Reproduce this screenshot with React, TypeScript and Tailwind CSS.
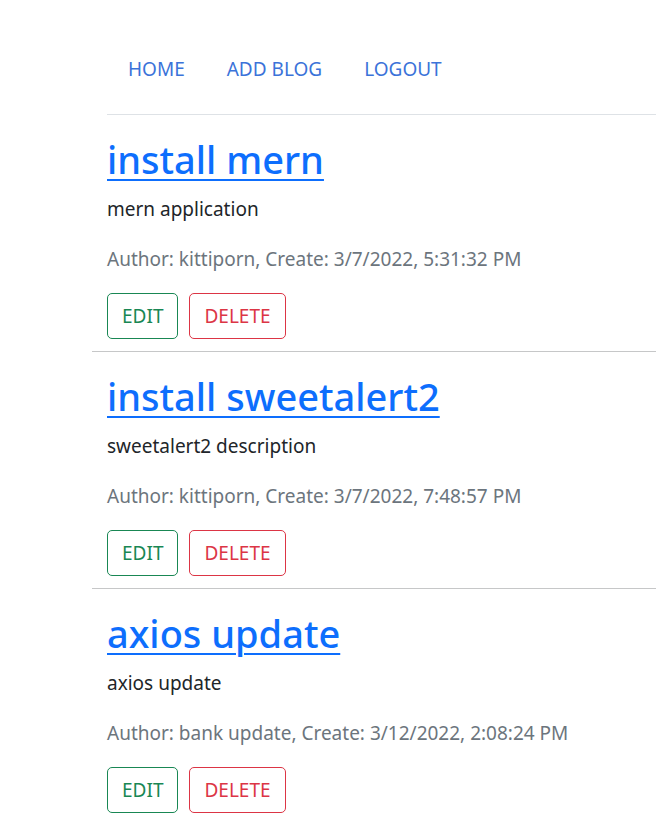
import React from 'react';

interface Blog {
  title: string;
  content: string;
  author: string;
  created: string;
}

const blogs: Blog[] = [
  { title: 'install mern', content: 'mern application', author: 'kittiporn', created: '3/7/2022, 5:31:32 PM' },
  { title: 'install sweetalert2', content: 'sweetalert2 description', author: 'kittiporn', created: '3/7/2022, 7:48:57 PM' },
  { title: 'axios update', content: 'axios update', author: 'bank update', created: '3/12/2022, 2:08:24 PM' },
];

const NavBar = () => (
  <nav className="ml-[15px] pt-[44px] pb-[20px] border-b border-[#dee2e6]">
    <ul className="flex">
      {['HOME', 'ADD BLOG', 'LOGOUT'].map((item) => (
        <li key={item}>
          <a href="#" className="block px-[21px] py-[10px] leading-[30px] text-[#3b73d9]">
            {item}
          </a>
        </li>
      ))}
    </ul>
  </nav>
);

const BlogItem = ({ blog }: { blog: Blog }) => (
  <div className="pl-[15px] pt-[20px] pb-[12px] border-b border-[#c6c7c8]">
    <a href="#" className="text-[38px] leading-[49px] font-medium text-[#0d6efd] underline decoration-[2px] underline-offset-[5px]">
      {blog.title}
    </a>
    <p className="mt-[10px] mb-[20px] leading-[30px] text-[#212529]">{blog.content}</p>
    <p className="mb-[19px] leading-[30px] text-[#6c757d]">
      Author: {blog.author}, Create: {blog.created}
    </p>
    <div className="flex gap-[11px]">
      <button className="h-[46px] px-[14px] rounded-[5px] border border-[#198754] text-[#198754] leading-[30px]">
        EDIT
      </button>
      <button className="h-[46px] px-[14px] rounded-[5px] border border-[#dc3545] text-[#dc3545] leading-[30px]">
        DELETE
      </button>
    </div>
  </div>
);

export default function App() {
  return (
    <div className="min-h-screen bg-white text-[19px] font-['Noto_Sans',sans-serif]">
      <div className="ml-[92px]">
        <NavBar />
        <div>
          {blogs.map((b) => (
            <BlogItem key={b.title} blog={b} />
          ))}
        </div>
      </div>
    </div>
  );
}
